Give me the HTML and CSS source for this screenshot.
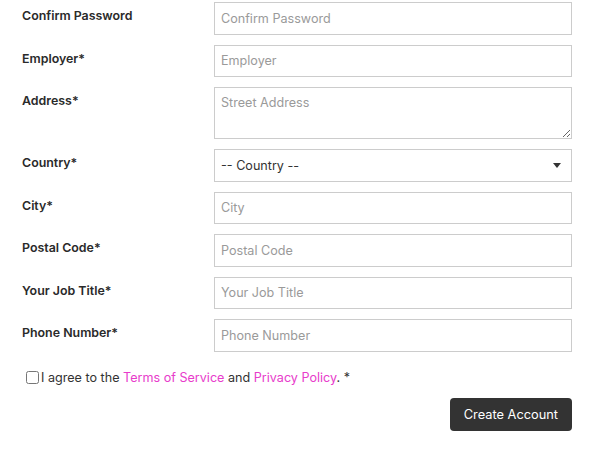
FILE: index.html
```html
<!DOCTYPE html>
<html>
<head>
<meta charset="utf-8">
<link rel="stylesheet" href="styles.css">
</head>
<body>
<form class="form">
  <div class="row">
    <label class="label">Confirm Password</label>
    <input class="field" type="password" placeholder="Confirm Password">
  </div>
  <div class="row">
    <label class="label">Employer*</label>
    <input class="field" type="text" placeholder="Employer">
  </div>
  <div class="row">
    <label class="label">Address*</label>
    <textarea class="field area" placeholder="Street Address"></textarea>
  </div>
  <div class="row">
    <label class="label">Country*</label>
    <div class="select-wrap">
      <select class="field select">
        <option>-- Country --</option>
      </select>
      <span class="caret"></span>
    </div>
  </div>
  <div class="row">
    <label class="label">City*</label>
    <input class="field" type="text" placeholder="City">
  </div>
  <div class="row">
    <label class="label">Postal Code*</label>
    <input class="field" type="text" placeholder="Postal Code">
  </div>
  <div class="row">
    <label class="label">Your Job Title*</label>
    <input class="field" type="text" placeholder="Your Job Title">
  </div>
  <div class="row">
    <label class="label">Phone Number*</label>
    <input class="field" type="text" placeholder="Phone Number">
  </div>
  <div class="agree">
    <input class="check" type="checkbox">
    <span>I agree to the <a class="link" href="#">Terms of Service</a> and <a class="link" href="#">Privacy Policy</a>. *</span>
  </div>
  <div class="actions">
    <button class="btn" type="button">Create Account</button>
  </div>
</form>
</body>
</html>
```
FILE: styles.css
```css
* { box-sizing: border-box; }
html, body { margin: 0; background: #fff; }
body {
  font-family: "Inter", "Liberation Sans", Arial, sans-serif;
  color: #333;
  font-size: 12.6px;
}
.form {
  width: 572px;
  padding: 2px 0 0 22px;
}
.row {
  display: grid;
  grid-template-columns: 192px 358px;
  margin-bottom: 10px;
}
.label {
  font-weight: 600;
  font-size: 12.4px;
  line-height: 16px;
  padding-top: 6px;
  color: #2a2a2a;
}
.field {
  display: block;
  width: 358px;
  height: 32.5px;
  border: 1px solid #cccccc;
  border-radius: 0;
  padding: 0 6px;
  font-family: inherit;
  font-size: 12.6px;
  color: #333;
  background: #fff;
  outline: none;
  margin: 0;
}
.field::placeholder { color: #9a9a9a; }
.area {
  height: 52px;
  padding: 7px 6px;
  resize: vertical;
}
.select-wrap { position: relative; }
.select {
  -webkit-appearance: none;
  appearance: none;
  color: #333;
}
.caret {
  position: absolute;
  right: 11px;
  top: 14px;
  width: 0;
  height: 0;
  border-left: 4px solid transparent;
  border-right: 4px solid transparent;
  border-top: 5px solid #333;
}
.agree {
  display: flex;
  align-items: center;
  margin-top: 18px;
  padding-left: 4px;
  font-size: 12.6px;
  line-height: 16px;
  color: #333;
}
.check {
  width: 13px;
  height: 13px;
  margin: 0 2px 0 0;
}
.link { color: #e83ccb; text-decoration: none; }
.actions {
  display: flex;
  justify-content: flex-end;
  margin-top: 12px;
}
.btn {
  background: #333;
  color: #fff;
  border: none;
  border-radius: 4px;
  height: 33px;
  padding: 0 14px;
  font-family: inherit;
  font-size: 12.8px;
}
```
